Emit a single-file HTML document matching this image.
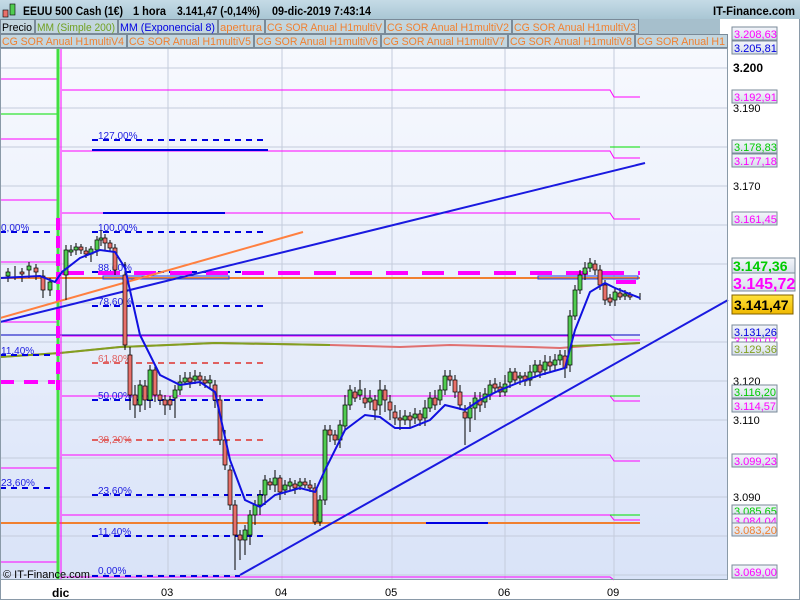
<!DOCTYPE html>
<html><head><meta charset="utf-8"><style>
html,body{margin:0;padding:0;width:800px;height:600px;overflow:hidden;background:#fff;font-family:"Liberation Sans",sans-serif}
svg text{font-family:"Liberation Sans",sans-serif}
</style></head><body>
<svg width="800" height="600" xmlns="http://www.w3.org/2000/svg">
<defs>
<linearGradient id="bg" x1="0" y1="0" x2="0" y2="1"><stop offset="0" stop-color="#f7f9fe"/><stop offset="1" stop-color="#d9e3f8"/></linearGradient>
<linearGradient id="hd" x1="0" y1="0" x2="0" y2="1"><stop offset="0" stop-color="#c5dbe6"/><stop offset="1" stop-color="#a9c6d4"/></linearGradient>
<linearGradient id="lb" x1="0" y1="0" x2="0" y2="1"><stop offset="0" stop-color="#f4f6fb"/><stop offset="1" stop-color="#d6deea"/></linearGradient>
<linearGradient id="yl" x1="0" y1="0" x2="0" y2="1"><stop offset="0" stop-color="#ffe23a"/><stop offset="1" stop-color="#f0b800"/></linearGradient>
</defs>
<rect x="0" y="0" width="800" height="600" fill="#fff"/>
<rect x="0" y="48" width="727" height="532" fill="url(#bg)"/>
<g stroke="#c4ccdc" stroke-width="1">
<line x1="0" y1="68" x2="727" y2="68"/><line x1="0" y1="108" x2="727" y2="108"/><line x1="0" y1="147" x2="727" y2="147"/><line x1="0" y1="186" x2="727" y2="186"/><line x1="0" y1="225" x2="727" y2="225"/><line x1="0" y1="264" x2="727" y2="264"/><line x1="0" y1="303" x2="727" y2="303"/><line x1="0" y1="342" x2="727" y2="342"/><line x1="0" y1="381" x2="727" y2="381"/><line x1="0" y1="420" x2="727" y2="420"/><line x1="0" y1="458" x2="727" y2="458"/><line x1="0" y1="497" x2="727" y2="497"/><line x1="0" y1="536" x2="727" y2="536"/><line x1="0" y1="575" x2="727" y2="575"/>
<line x1="168" y1="48" x2="168" y2="580"/><line x1="282" y1="48" x2="282" y2="580"/><line x1="392" y1="48" x2="392" y2="580"/><line x1="505" y1="48" x2="505" y2="580"/><line x1="614" y1="48" x2="614" y2="580"/>
</g>
<g stroke="#ff00ff" stroke-width="1" fill="none">
<polyline points="0,79 57,79"/><polyline points="0,139 57,139"/><polyline points="0,200 57,200"/><polyline points="0,262 57,262"/><polyline points="0,322 57,322"/><polyline points="0,468 57,468"/><polyline points="0,562 57,562"/>
<polyline points="62,90 610,90 614,97 640,97"/><polyline points="62,151 610,151 614,158 640,158"/><polyline points="62,213 610,213 614,219 640,219"/>
<polyline points="62,336 610,336 614,340 640,340"/><polyline points="62,396 610,396 614,401 640,401"/><polyline points="62,455 610,455 614,461 640,461"/><polyline points="62,515 610,515 614,520 640,520"/><polyline points="62,577 610,577 614,580"/>
</g>
<g stroke="#00e000" stroke-width="1"><line x1="0" y1="114" x2="57" y2="114"/><line x1="610" y1="147" x2="640" y2="147"/><line x1="610" y1="396" x2="640" y2="396"/><line x1="610" y1="515" x2="640" y2="515"/></g>
<line x1="0" y1="335" x2="640" y2="335" stroke="#0000c0" stroke-width="1"/>
<line x1="0" y1="278" x2="640" y2="278" stroke="#f08030" stroke-width="2"/>
<line x1="0" y1="523" x2="640" y2="523" stroke="#f08030" stroke-width="2"/>
<line x1="426" y1="523" x2="488" y2="523" stroke="#0000e0" stroke-width="2"/>
<polyline points="0,357 60,353 120,347 215,343 330,345 400,347 450,345 530,347 560,348 600,345 640,343" fill="none" stroke="#e07070" stroke-width="2"/>
<polyline points="0,357 60,353 120,347 215,343 330,345" fill="none" stroke="#80a020" stroke-width="2"/>
<polyline points="570,346 600,345 640,343" fill="none" stroke="#80a020" stroke-width="2"/>
<g stroke="#0000e0" stroke-width="2" stroke-dasharray="6,5">
<line x1="92" y1="140" x2="268" y2="140"/><line x1="92" y1="232" x2="268" y2="232"/><line x1="92" y1="272" x2="268" y2="272"/><line x1="92" y1="306" x2="268" y2="306"/><line x1="92" y1="400" x2="268" y2="400"/><line x1="92" y1="495" x2="268" y2="495"/><line x1="92" y1="536" x2="268" y2="536"/><line x1="92" y1="576" x2="240" y2="576"/>
<line x1="0" y1="232" x2="55" y2="232"/><line x1="0" y1="355" x2="55" y2="355"/><line x1="0" y1="488" x2="55" y2="488"/>
</g>
<g stroke="#e06060" stroke-width="2" stroke-dasharray="6,5"><line x1="92" y1="363" x2="268" y2="363"/><line x1="92" y1="440" x2="268" y2="440"/></g>
<line x1="92" y1="150" x2="268" y2="150" stroke="#0000e0" stroke-width="2"/>
<line x1="103" y1="213" x2="225" y2="213" stroke="#0000e0" stroke-width="2"/>
<g font-size="10" fill="#2020e0">
<text x="98" y="139">127,00%</text><text x="98" y="231">100,00%</text><text x="98" y="271">88,60%</text><text x="98" y="305">78,60%</text><text x="98" y="399">50,00%</text><text x="98" y="494">23,60%</text><text x="98" y="535">11,40%</text><text x="98" y="574">0,00%</text>
<text x="1" y="231">0,00%</text><text x="1" y="354">11,40%</text><text x="1" y="486">23,60%</text>
</g>
<g font-size="10" fill="#e06060"><text x="98" y="362">61,80%</text><text x="98" y="443">38,20%</text></g>
<line x1="62" y1="273" x2="640" y2="273" stroke="#ff00ff" stroke-width="4" stroke-dasharray="22,14"/>
<line x1="0" y1="382" x2="55" y2="382" stroke="#ff00ff" stroke-width="4" stroke-dasharray="14,10"/>
<rect x="103" y="276" width="126" height="3" fill="none" stroke="#2040e0"/>
<rect x="538" y="276" width="100" height="3" fill="none" stroke="#2040e0"/>
<rect x="616" y="280" width="20" height="4" fill="#ff00ff"/>
<line x1="58" y1="48" x2="58" y2="580" stroke="#40e040" stroke-width="3"/>
<line x1="61" y1="48" x2="61" y2="580" stroke="#ff00ff" stroke-width="1"/>
<line x1="58" y1="218" x2="58" y2="390" stroke="#ff00ff" stroke-width="4" stroke-dasharray="12,6"/>
<line x1="0" y1="318" x2="303" y2="232" stroke="#ff8040" stroke-width="2"/>
<line x1="0" y1="322" x2="645" y2="163" stroke="#1a1ae0" stroke-width="2"/>
<line x1="240" y1="575" x2="728" y2="300" stroke="#1a1ae0" stroke-width="2"/>
<g stroke="#000" stroke-width="1">
<path d="M8,268V282M15,266V280M22,268V282M29,262V278M36,264V280M43,270V298M50,278V296M66,245V300M71,245V256M76,243V255M81,244V254M86,247V258M91,246V262M97,236V256M101,230V246M105,234V250M110,240V252M115,244V275M125,262V350M130,347V410M135,385V418M140,380V412M145,380V410M150,365V408M155,365V402M160,390V405M165,395V415M170,396V410M175,385V418M180,375V395M185,372V385M190,372V388M195,370V384M200,372V386M205,376V388M210,375V388M215,380V408M220,395V445M225,430V470M230,465V510M235,500V570M240,530V560M245,525V555M250,510V545M255,500V525M260,490V515M265,475V505M270,478V490M275,470V492M280,475V500M285,480V495M290,478V490M295,480V494M300,478V490M305,478V488M310,480V492M315,483V525M320,495V526M325,425V505M330,425V442M335,430V445M340,420V448M345,395V430M350,385V410M355,387V402M360,380V400M365,388V408M370,390V410M375,395V420M380,380V415M385,385V412M390,395V420M395,405V425M400,410V430M405,410V425M410,412V428M415,408V424M420,410V426M425,400V426M430,392V412M435,390V410M440,385V405M445,370V395M450,370V386M455,375V398M460,385V410M465,405V445M470,402V432M475,392V420M480,392V412M485,388V408M490,380V400M495,378V392M500,382V397M505,375V396M510,368V388M515,368V385M520,372V385M525,372V386M530,365V386M535,360V378M540,360V378M545,355V375M550,356V372M555,354V370M560,350V365M565,350V378M570,310V372M575,285V320M580,270V294M585,262V280M590,258V272M595,260V275M600,265V290M605,280V305M610,294V306M615,288V306M620,288V300M625,290V300M630,292V300M640,293V300"/>
</g>
<g stroke="#000" stroke-width="0.7" fill="#50cc50">
<rect x="6" y="272" width="4" height="4"/><rect x="27" y="266" width="4" height="4"/><rect x="48" y="282" width="4" height="8"/><rect x="64" y="250" width="4" height="25"/><rect x="69" y="250" width="4" height="2"/><rect x="74" y="247" width="4" height="3"/><rect x="89" y="249" width="4" height="5"/><rect x="95" y="240" width="4" height="10"/><rect x="99" y="238" width="4" height="2"/><rect x="138" y="385" width="4" height="20"/><rect x="148" y="370" width="4" height="30"/><rect x="173" y="390" width="4" height="8"/><rect x="178" y="382" width="4" height="8"/><rect x="183" y="378" width="4" height="4"/><rect x="193" y="376" width="4" height="4"/><rect x="208" y="380" width="4" height="3"/><rect x="243" y="530" width="4" height="10"/><rect x="248" y="515" width="4" height="20"/><rect x="253" y="505" width="4" height="10"/><rect x="258" y="495" width="4" height="10"/><rect x="263" y="480" width="4" height="15"/><rect x="273" y="478" width="4" height="7"/><rect x="283" y="485" width="4" height="5"/><rect x="288" y="482" width="4" height="4"/><rect x="298" y="482" width="4" height="4"/><rect x="318" y="500" width="4" height="22"/><rect x="323" y="430" width="4" height="70"/><rect x="338" y="425" width="4" height="15"/><rect x="343" y="405" width="4" height="21"/><rect x="348" y="390" width="4" height="15"/><rect x="358" y="390" width="4" height="5"/><rect x="368" y="398" width="4" height="4"/><rect x="378" y="390" width="4" height="15"/><rect x="403" y="416" width="4" height="4"/><rect x="413" y="414" width="4" height="4"/><rect x="423" y="408" width="4" height="10"/><rect x="428" y="398" width="4" height="10"/><rect x="438" y="390" width="4" height="10"/><rect x="443" y="376" width="4" height="14"/><rect x="468" y="408" width="4" height="10"/><rect x="473" y="398" width="4" height="10"/><rect x="483" y="394" width="4" height="8"/><rect x="488" y="385" width="4" height="10"/><rect x="503" y="384" width="4" height="8"/><rect x="508" y="372" width="4" height="10"/><rect x="518" y="376" width="4" height="2"/><rect x="528" y="372" width="4" height="8"/><rect x="533" y="365" width="4" height="7"/><rect x="543" y="362" width="4" height="8"/><rect x="553" y="360" width="4" height="5"/><rect x="558" y="355" width="4" height="5"/><rect x="568" y="316" width="4" height="49"/><rect x="573" y="290" width="4" height="26"/><rect x="578" y="275" width="4" height="15"/><rect x="583" y="268" width="4" height="6"/><rect x="588" y="263" width="4" height="5"/><rect x="613" y="292" width="4" height="8"/><rect x="623" y="294" width="4" height="2"/>
</g>
<g stroke="#000" stroke-width="0.7" fill="#e8706a">
<rect x="20" y="272" width="4" height="2"/><rect x="34" y="268" width="4" height="4"/><rect x="41" y="276" width="4" height="14"/><rect x="79" y="247" width="4" height="3"/><rect x="84" y="251" width="4" height="3"/><rect x="103" y="238" width="4" height="5"/><rect x="108" y="243" width="4" height="5"/><rect x="113" y="248" width="4" height="22"/><rect x="123" y="275" width="4" height="70"/><rect x="128" y="355" width="4" height="40"/><rect x="133" y="395" width="4" height="10"/><rect x="143" y="386" width="4" height="14"/><rect x="153" y="370" width="4" height="25"/><rect x="158" y="395" width="4" height="5"/><rect x="163" y="400" width="4" height="5"/><rect x="168" y="400" width="4" height="5"/><rect x="188" y="378" width="4" height="4"/><rect x="198" y="376" width="4" height="4"/><rect x="203" y="380" width="4" height="3"/><rect x="213" y="385" width="4" height="15"/><rect x="218" y="400" width="4" height="40"/><rect x="223" y="440" width="4" height="25"/><rect x="228" y="470" width="4" height="35"/><rect x="233" y="505" width="4" height="30"/><rect x="238" y="535" width="4" height="5"/><rect x="268" y="482" width="4" height="3"/><rect x="278" y="478" width="4" height="14"/><rect x="293" y="484" width="4" height="4"/><rect x="303" y="482" width="4" height="3"/><rect x="308" y="485" width="4" height="3"/><rect x="313" y="488" width="4" height="34"/><rect x="328" y="430" width="4" height="5"/><rect x="333" y="435" width="4" height="5"/><rect x="353" y="392" width="4" height="6"/><rect x="363" y="398" width="4" height="5"/><rect x="373" y="400" width="4" height="10"/><rect x="383" y="390" width="4" height="10"/><rect x="388" y="402" width="4" height="8"/><rect x="393" y="412" width="4" height="6"/><rect x="398" y="418" width="4" height="2"/><rect x="408" y="416" width="4" height="4"/><rect x="418" y="414" width="4" height="6"/><rect x="433" y="398" width="4" height="7"/><rect x="448" y="376" width="4" height="4"/><rect x="453" y="380" width="4" height="12"/><rect x="458" y="392" width="4" height="13"/><rect x="463" y="412" width="4" height="6"/><rect x="478" y="400" width="4" height="5"/><rect x="493" y="384" width="4" height="4"/><rect x="498" y="387" width="4" height="5"/><rect x="513" y="372" width="4" height="8"/><rect x="523" y="376" width="4" height="5"/><rect x="538" y="365" width="4" height="7"/><rect x="548" y="362" width="4" height="4"/><rect x="563" y="356" width="4" height="12"/><rect x="593" y="264" width="4" height="6"/><rect x="598" y="270" width="4" height="15"/><rect x="603" y="285" width="4" height="15"/><rect x="608" y="298" width="4" height="4"/><rect x="618" y="293" width="4" height="4"/><rect x="628" y="295" width="4" height="2"/>
</g>
<polyline points="0,278 40,276 55,282 62,272 80,258 100,250 115,252 125,268 140,335 160,375 180,385 200,382 215,392 230,460 245,500 260,507 275,495 300,488 315,492 325,470 345,430 365,415 380,417 395,428 410,428 430,420 445,405 465,410 480,400 500,390 520,382 540,375 565,368 575,330 590,292 605,283 615,288 640,298" fill="none" stroke="#1010e0" stroke-width="2"/>
<rect x="0.5" y="48.5" width="727" height="531" fill="none" stroke="#8a9aa8"/>
<g font-size="11" fill="#000">
<text x="733" y="72" font-weight="bold" font-size="12">3.200</text><text x="733" y="112">3.190</text><text x="733" y="190">3.170</text><text x="733" y="385">3.120</text><text x="733" y="424">3.110</text><text x="733" y="501">3.090</text>
</g>
<g font-size="11">
<rect x="732" y="27" width="45" height="13" fill="url(#lb)" stroke="#7a8a98"/><text x="734" y="38" fill="#ff00ff">3.208,63</text>
<rect x="732" y="41" width="45" height="13" fill="url(#lb)" stroke="#7a8a98"/><text x="734" y="52" fill="#0000e0">3.205,81</text>
<rect x="732" y="90" width="45" height="13" fill="url(#lb)" stroke="#7a8a98"/><text x="734" y="101" fill="#ff00ff">3.192,91</text>
<rect x="732" y="140" width="45" height="13" fill="url(#lb)" stroke="#7a8a98"/><text x="734" y="151" fill="#00cc00">3.178,83</text>
<rect x="732" y="154" width="45" height="13" fill="url(#lb)" stroke="#7a8a98"/><text x="734" y="165" fill="#ff00ff">3.177,18</text>
<rect x="732" y="212" width="45" height="13" fill="url(#lb)" stroke="#7a8a98"/><text x="734" y="223" fill="#ff00ff">3.161,45</text>
<rect x="732" y="258" width="63" height="15" fill="url(#lb)" stroke="#7a8a98"/><text x="733" y="271" fill="#00cc00" font-size="14" font-weight="bold">3.147,36</text>
<rect x="732" y="273" width="63" height="18" fill="url(#lb)" stroke="#7a8a98"/><text x="733" y="289" fill="#ff00ff" font-size="16" font-weight="bold">3.145,72</text>
<rect x="732" y="295" width="61" height="19" fill="url(#yl)" stroke="#806000"/><text x="734" y="310" fill="#000" font-size="14" font-weight="bold">3.141,47</text>
<rect x="732" y="325" width="45" height="13" fill="url(#lb)" stroke="#7a8a98"/><text x="734" y="336" fill="#0000e0">3.131,26</text>
<text x="734" y="345" fill="#ff00ff">3.130,07</text>
<rect x="732" y="342" width="45" height="13" fill="url(#lb)" stroke="#7a8a98"/><text x="734" y="353" fill="#80a020">3.129,36</text>
<rect x="732" y="385" width="45" height="13" fill="url(#lb)" stroke="#7a8a98"/><text x="734" y="396" fill="#00cc00">3.116,20</text>
<rect x="732" y="399" width="45" height="13" fill="url(#lb)" stroke="#7a8a98"/><text x="734" y="410" fill="#ff00ff">3.114,57</text>
<rect x="732" y="454" width="45" height="13" fill="url(#lb)" stroke="#7a8a98"/><text x="734" y="465" fill="#ff00ff">3.099,23</text>
<rect x="732" y="505" width="45" height="13" fill="url(#lb)" stroke="#7a8a98"/><text x="734" y="515" fill="#00cc00">3.085,65</text>
<rect x="732" y="514" width="45" height="13" fill="url(#lb)" stroke="#7a8a98"/><text x="734" y="525" fill="#ff00ff">3.084,04</text>
<rect x="732" y="523" width="45" height="13" fill="url(#lb)" stroke="#7a8a98"/><text x="734" y="534" fill="#f08030">3.083,20</text>
<rect x="732" y="565" width="45" height="13" fill="url(#lb)" stroke="#7a8a98"/><text x="734" y="576" fill="#ff00ff">3.069,00</text>
</g>
<g font-size="11" fill="#000"><text x="52" y="597" font-weight="bold" font-size="12">dic</text><text x="161" y="596">03</text><text x="275" y="596">04</text><text x="385" y="596">05</text><text x="498" y="596">06</text><text x="607" y="596">09</text></g>
<text x="3" y="578" font-size="11" fill="#000">© IT-Finance.com</text>
<rect x="0.5" y="0.5" width="799" height="599" fill="none" stroke="#8a9aa8"/>
<rect x="0" y="0" width="800" height="19" fill="url(#hd)"/>
<rect x="3" y="10" width="5" height="7" fill="#e8706a" stroke="#000" stroke-width="0.6"/><rect x="10" y="4" width="5" height="11" fill="#50cc50" stroke="#000" stroke-width="0.6"/>
<g font-size="12" font-weight="bold" fill="#000">
<text x="23" y="15" textLength="100" lengthAdjust="spacingAndGlyphs">EEUU 500 Cash (1€)</text>
<text x="133" y="15" textLength="33" lengthAdjust="spacingAndGlyphs">1 hora</text>
<text x="177" y="15" textLength="83" lengthAdjust="spacingAndGlyphs">3.141,47 (-0,14%)</text>
<text x="272" y="15" textLength="99" lengthAdjust="spacingAndGlyphs">09-dic-2019 7:43:14</text>
<text x="713" y="15" textLength="82" lengthAdjust="spacingAndGlyphs">IT-Finance.com</text></g>
<g font-size="11">
<rect x="0" y="19" width="720" height="15" fill="#a6bfcc"/><rect x="0" y="34" width="727" height="14" fill="#a6bfcc"/>
<rect x="0.5" y="19.5" width="34" height="14" fill="#c3d6df" stroke="#7a8a98"/><text x="2" y="31" fill="#000" textLength="30" lengthAdjust="spacingAndGlyphs">Precio</text>
<rect x="35.5" y="19.5" width="82" height="14" fill="#c3d6df" stroke="#7a8a98"/><text x="37" y="31" fill="#70a020" textLength="78" lengthAdjust="spacingAndGlyphs">MM (Simple 200)</text>
<rect x="118.5" y="19.5" width="99" height="14" fill="#c3d6df" stroke="#7a8a98"/><text x="120" y="31" fill="#0000e0" textLength="95" lengthAdjust="spacingAndGlyphs">MM (Exponencial 8)</text>
<rect x="218.5" y="19.5" width="46" height="14" fill="#c3d6df" stroke="#7a8a98"/><text x="220" y="31" fill="#f08030" textLength="42" lengthAdjust="spacingAndGlyphs">apertura</text>
<rect x="265.5" y="19.5" width="119" height="14" fill="#c3d6df" stroke="#7a8a98"/><text x="267" y="31" fill="#f08030" textLength="115" lengthAdjust="spacingAndGlyphs">CG SOR Anual H1multiV</text>
<rect x="385.5" y="19.5" width="126" height="14" fill="#c3d6df" stroke="#7a8a98"/><text x="387" y="31" fill="#f08030" textLength="122" lengthAdjust="spacingAndGlyphs">CG SOR Anual H1multiV2</text>
<rect x="512.5" y="19.5" width="126" height="14" fill="#c3d6df" stroke="#7a8a98"/><text x="514" y="31" fill="#f08030" textLength="122" lengthAdjust="spacingAndGlyphs">CG SOR Anual H1multiV3</text>
<rect x="0.5" y="34.5" width="126" height="13" fill="#c3d6df" stroke="#7a8a98"/><text x="2" y="45" fill="#f08030" textLength="122" lengthAdjust="spacingAndGlyphs">CG SOR Anual H1multiV4</text>
<rect x="127.5" y="34.5" width="126" height="13" fill="#c3d6df" stroke="#7a8a98"/><text x="129" y="45" fill="#f08030" textLength="122" lengthAdjust="spacingAndGlyphs">CG SOR Anual H1multiV5</text>
<rect x="254.5" y="34.5" width="126" height="13" fill="#c3d6df" stroke="#7a8a98"/><text x="256" y="45" fill="#f08030" textLength="122" lengthAdjust="spacingAndGlyphs">CG SOR Anual H1multiV6</text>
<rect x="381.5" y="34.5" width="126" height="13" fill="#c3d6df" stroke="#7a8a98"/><text x="383" y="45" fill="#f08030" textLength="122" lengthAdjust="spacingAndGlyphs">CG SOR Anual H1multiV7</text>
<rect x="508.5" y="34.5" width="126" height="13" fill="#c3d6df" stroke="#7a8a98"/><text x="510" y="45" fill="#f08030" textLength="122" lengthAdjust="spacingAndGlyphs">CG SOR Anual H1multiV8</text>
<rect x="635.5" y="34.5" width="92" height="13" fill="#c3d6df" stroke="#7a8a98"/><text x="637" y="45" fill="#f08030" textLength="88" lengthAdjust="spacingAndGlyphs">CG SOR Anual H1</text>
</g>
</svg>
</body></html>
